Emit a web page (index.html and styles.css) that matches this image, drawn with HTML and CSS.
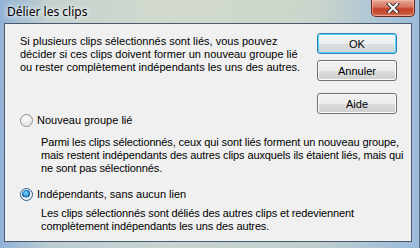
FILE: index.html
```html
<!DOCTYPE html>
<html lang="fr">
<head>
  <meta charset="UTF-8" />
  <title>Délier les clips</title>
  <link rel="stylesheet" href="styles.css">
</head>
<body>

  <div class="window">
    <!-- Barre de titre -->
    <div class="titlebar">
      <span class="title">Délier les clips</span>
      <button class="close" aria-label="Fermer">
        <svg width="18" height="10" viewBox="0 0 18 10">
          <path d="M5 1 L13 9 M13 1 L5 9" stroke="#3a3a3a" stroke-width="4" stroke-linecap="square"/>
          <path d="M5 1 L13 9 M13 1 L5 9" stroke="#fff" stroke-width="2" stroke-linecap="square"/>
        </svg>
      </button>
    </div>

    <!-- Zone cliente -->
    <div class="client">
      <div class="top">
        <p class="intro">Si plusieurs clips sélectionnés sont liés, vous pouvez décider si ces clips doivent former un nouveau groupe lié ou rester complètement indépendants les uns des autres.</p>
        <div class="buttons">
          <button class="btn default">OK</button>
          <button class="btn">Annuler</button>
          <button class="btn help">Aide</button>
        </div>
      </div>

      <label class="option">
        <span class="radio"></span>
        Nouveau groupe lié
      </label>
      <p class="desc">Parmi les clips sélectionnés, ceux qui sont liés forment un nouveau groupe, mais restent indépendants des autres clips auxquels ils étaient liés, mais qui ne sont pas sélectionnés.</p>

      <label class="option second">
        <span class="radio checked"></span>
        Indépendants, sans aucun lien
      </label>
      <p class="desc last">Les clips sélectionnés sont déliés des autres clips et redeviennent complètement indépendants les uns des autres.</p>
    </div>
  </div>

</body>
</html>
```
FILE: styles.css
```css
* {
  box-sizing: border-box;
  margin: 0;
  padding: 0;
}

html, body {
  width: 420px;
  height: 248px;
  overflow: hidden;
  font-family: "Liberation Sans", Arial, sans-serif;
}

.window {
  width: 420px;
  height: 248px;
  display: flex;
  flex-direction: column;
  padding: 0 7px 6px 4px;
  background:
    linear-gradient(90deg, rgba(140, 175, 215, 0.9) 0%, rgba(190, 205, 200, 0.6) 12%, rgba(215, 220, 195, 0.5) 40%, rgba(200, 210, 190, 0.5) 75%, rgba(150, 185, 220, 0.9) 100%),
    linear-gradient(180deg, #cfd9d8 0%, #b9cde0 100%);
  border-right: 1px solid #5a6f86;
}

.titlebar {
  height: 23px;
  display: flex;
  align-items: flex-start;
  flex-shrink: 0;
}

.title {
  font-family: "Noto Sans", "Open Sans", sans-serif;
  font-size: 12px;
  line-height: 12px;
  margin: 6px 0 0 3px;
  color: #000;
  text-shadow: 0 0 6px #fff, 0 0 4px #fff;
}

.close {
  margin-left: auto;
  margin-right: -3px;
  width: 44px;
  height: 17px;
  display: flex;
  align-items: center;
  justify-content: center;
  border: 1px solid #6b2a22;
  border-top: none;
  border-radius: 0 0 5px 5px;
  background: linear-gradient(180deg, #e9a99b 0%, #d7715c 45%, #c3412a 55%, #c9553b 85%, #dd8a6f 100%);
  box-shadow: inset 0 0 0 1px rgba(255, 200, 180, 0.5);
}

.client {
  flex: 1;
  background: #f0f0f0;
  border: 1px solid #4b5a6c;
  padding: 9px 14px 0 15px;
  font-size: 11px;
  line-height: 13px;
  color: #000;
}

.top {
  display: flex;
  align-items: flex-start;
}

.intro {
  width: 290px;
  margin-top: 2px;
}

.buttons {
  margin-left: auto;
  display: flex;
  flex-direction: column;
  gap: 6px;
}

.btn {
  width: 80px;
  height: 21px;
  font-family: inherit;
  font-size: 11px;
  color: #000;
  border: 1px solid #707070;
  border-radius: 3px;
  background: linear-gradient(180deg, #f2f2f2 0%, #ebebeb 50%, #dddddd 51%, #cfcfcf 100%);
  box-shadow: inset 0 0 0 1px #fcfcfc;
}

.btn.default {
  border-color: #3c7fb1;
  box-shadow: inset 0 0 0 1px #48d8fb;
  background: linear-gradient(180deg, #f4f6f8 0%, #eceef0 50%, #dcdfe2 51%, #d2d6d9 100%);
}

.btn.help {
  margin-top: 6px;
}

.option {
  display: flex;
  align-items: center;
  gap: 4px;
  margin-top: 0;
  height: 13px;
}

.option.second {
  margin-top: 13px;
}

.radio {
  width: 13px;
  height: 13px;
  border-radius: 50%;
  border: 1px solid #8f8f8f;
  background: radial-gradient(circle at 40% 35%, #ffffff 0%, #f0f0f0 35%, #cfcfcf 100%);
  box-shadow: inset 0 0 0 1px #f4f4f4;
  flex-shrink: 0;
}

.radio.checked {
  border-color: #2c628b;
  background:
    radial-gradient(circle at 45% 40%, #8ce0ff 0%, #2f9be0 28%, #0c4e8c 45%, transparent 47%),
    radial-gradient(circle at 40% 35%, #ffffff 0%, #eef2f5 45%, #b9c5cf 100%);
}

.desc {
  margin: 9px 0 0 21px;
  width: 368px;
  letter-spacing: -0.12px;
}

.desc.last {
  margin-top: 6px;
}
```
